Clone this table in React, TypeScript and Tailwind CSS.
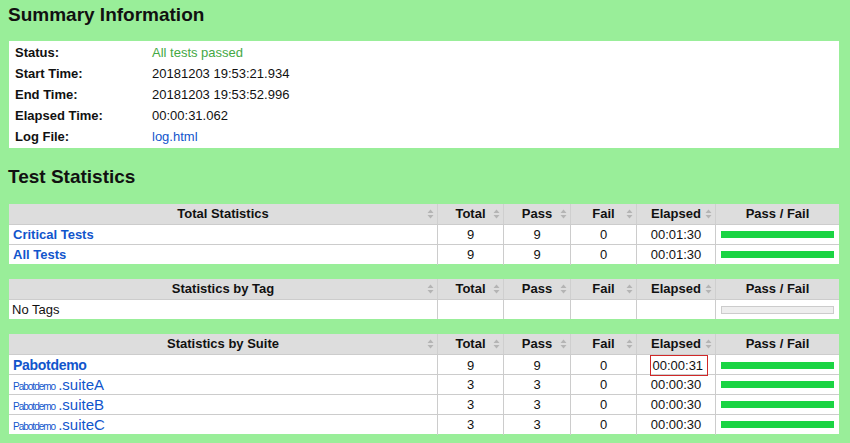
import type { ReactNode } from 'react';

const cols = 'grid grid-cols-[428px_66px_67px_66px_79px_124px]';

type StatRow = {
  name: ReactNode;
  total?: string;
  pass?: string;
  fail?: string;
  elapsed?: string;
  bar: 'pass' | 'empty';
  mark?: boolean;
};

function SortIcon() {
  return (
    <svg width="7" height="10" viewBox="0 0 7 10" className="shrink-0">
      <path d="M0.5 4 L3.5 0.5 L6.5 4 Z M0.5 6 L3.5 9.5 L6.5 6 Z" fill="#b4b4b4" />
    </svg>
  );
}

function HeadCell({ label, sort = true, first = false }: { label: string; sort?: boolean; first?: boolean }) {
  return (
    <div className={`flex items-center h-full ${first ? '' : 'border-l border-[#cfcfcf]'} ${sort ? 'pl-[10px] pr-[3px]' : 'px-[3px]'}`}>
      <span className="flex-1 text-center">{label}</span>
      {sort && <SortIcon />}
    </div>
  );
}

function StatTable({ title, rows }: { title: string; rows: StatRow[] }) {
  return (
    <div className="ml-[9px] w-[830px] text-[13px] text-[#111]">
      <div className={`${cols} h-[20px] bg-[#dddddd] font-bold`}>
        <HeadCell label={title} first />
        <HeadCell label="Total" />
        <HeadCell label="Pass" />
        <HeadCell label="Fail" />
        <HeadCell label="Elapsed" />
        <HeadCell label="Pass / Fail" sort={false} />
      </div>
      {rows.map((r, i) => (
        <div key={i} className={`${cols} h-[20px] bg-white border-t border-[#cccccc]`}>
          <div className="flex items-center pl-[4px] overflow-hidden whitespace-nowrap">{r.name}</div>
          <div className="flex items-center justify-center border-l border-[#cccccc]">{r.total}</div>
          <div className="flex items-center justify-center border-l border-[#cccccc]">{r.pass}</div>
          <div className="flex items-center justify-center border-l border-[#cccccc]">{r.fail}</div>
          <div className="flex items-center justify-center border-l border-[#cccccc]">
            {r.mark ? (
              <span className="inline-flex items-center w-[58px] h-[21px] pl-[2px] ml-[5px] border border-[#d02828]">{r.elapsed}</span>
            ) : (
              r.elapsed
            )}
          </div>
          <div className="flex items-center px-[5px] border-l border-[#cccccc]">
            {r.bar === 'pass' ? (
              <div className="h-[7px] w-full bg-[#1ad443]" />
            ) : (
              <div className="h-[8px] w-full bg-[#eeeeee] border border-[#cccccc]" />
            )}
          </div>
        </div>
      ))}
    </div>
  );
}

function Link({ children }: { children: ReactNode }) {
  return <span className="text-[#1155cc] font-bold">{children}</span>;
}

function SuiteName({ name }: { name: string }) {
  return (
    <span className="text-[#1155cc] text-[15px] flex items-baseline">
      <span className="text-[10px] tracking-[-1px]">Pabotdemo</span>
      <span className="ml-[3px]">.{name}</span>
    </span>
  );
}

const summary = [
  { label: 'Status:', value: <span className="text-[#44a844]">All tests passed</span> },
  { label: 'Start Time:', value: '20181203 19:53:21.934' },
  { label: 'End Time:', value: '20181203 19:53:52.996' },
  { label: 'Elapsed Time:', value: '00:00:31.062' },
  { label: 'Log File:', value: <span className="text-[#1155cc]">log.html</span> },
];

export default function App() {
  return (
    <div className="min-h-[443px] w-full bg-[#99ee99] pt-[4px] pb-[10px] font-['Liberation_Sans',Arial,sans-serif] text-[#111]">
      <h1 className="pl-[8px] text-[19px] leading-[22px] font-bold">Summary Information</h1>

      <div className="ml-[9px] mt-[15px] w-[830px] bg-white py-px text-[13px]">
        {summary.map((s) => (
          <div key={s.label} className="grid grid-cols-[143px_1fr] h-[21px] items-center">
            <div className="pl-[6px] font-bold">{s.label}</div>
            <div>{s.value}</div>
          </div>
        ))}
      </div>

      <h1 className="pl-[8px] mt-[18px] text-[19px] leading-[22px] font-bold">Test Statistics</h1>

      <div className="mt-[16px]">
        <StatTable
          title="Total Statistics"
          rows={[
            { name: <Link>Critical Tests</Link>, total: '9', pass: '9', fail: '0', elapsed: '00:01:30', bar: 'pass' },
            { name: <Link>All Tests</Link>, total: '9', pass: '9', fail: '0', elapsed: '00:01:30', bar: 'pass' },
          ]}
        />
      </div>

      <div className="mt-[15px]">
        <StatTable title="Statistics by Tag" rows={[{ name: <span className="-ml-px">No Tags</span>, bar: 'empty' }]} />
      </div>

      <div className="mt-[15px]">
        <StatTable
          title="Statistics by Suite"
          rows={[
            {
              name: <span className="text-[#1155cc] text-[14px] font-bold tracking-[-0.3px]">Pabotdemo</span>,
              total: '9',
              pass: '9',
              fail: '0',
              elapsed: '00:00:31',
              bar: 'pass',
              mark: true,
            },
            { name: <SuiteName name="suiteA" />, total: '3', pass: '3', fail: '0', elapsed: '00:00:30', bar: 'pass' },
            { name: <SuiteName name="suiteB" />, total: '3', pass: '3', fail: '0', elapsed: '00:00:30', bar: 'pass' },
            { name: <SuiteName name="suiteC" />, total: '3', pass: '3', fail: '0', elapsed: '00:00:30', bar: 'pass' },
          ]}
        />
      </div>
    </div>
  );
}
